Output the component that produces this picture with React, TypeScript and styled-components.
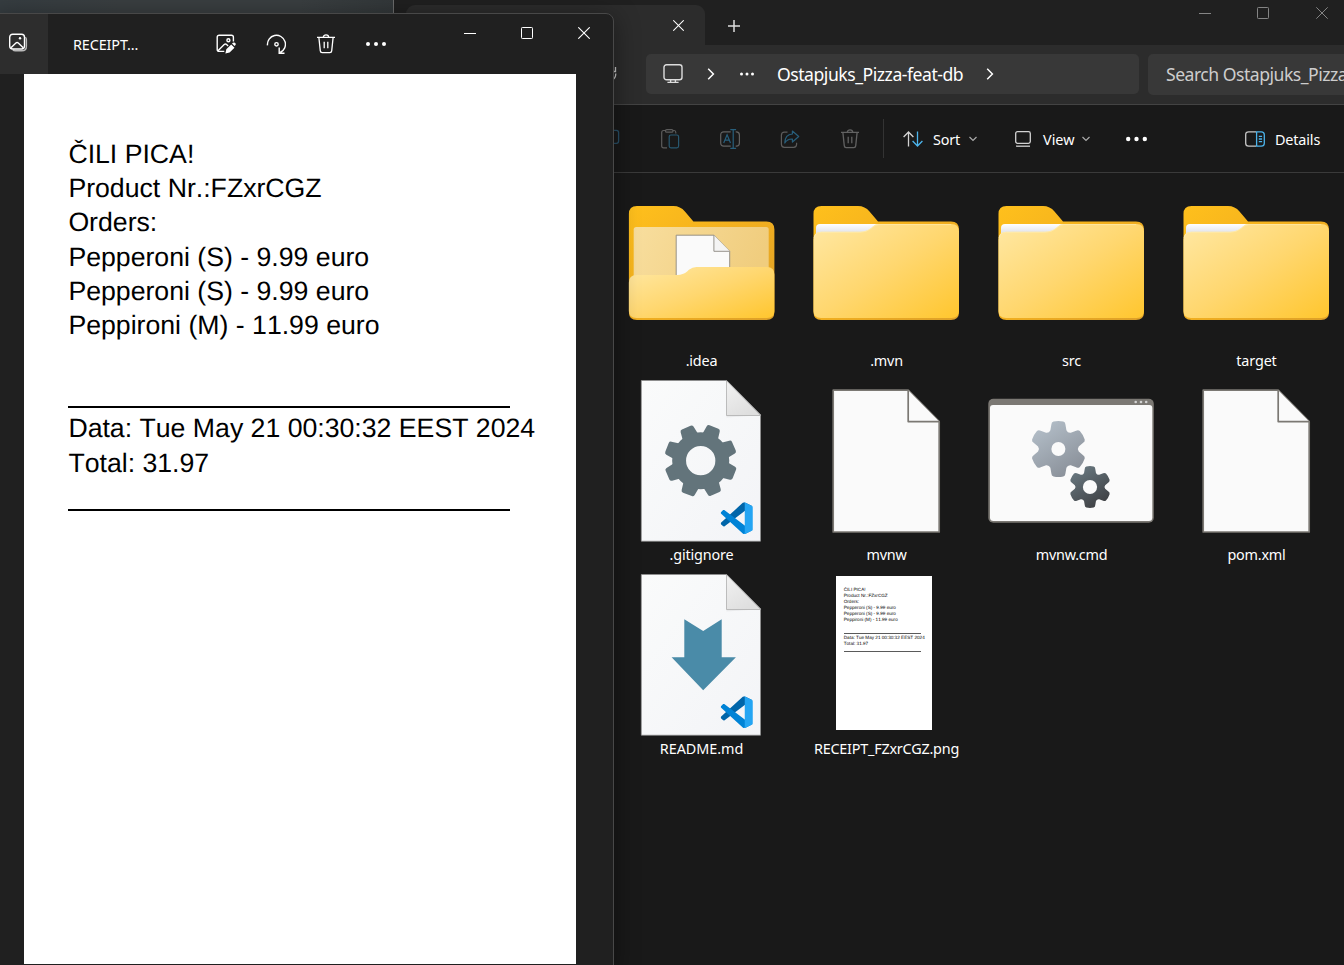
import React from "react";
import styled, { createGlobalStyle } from "styled-components";

const GlobalStyle = createGlobalStyle`
  * { box-sizing: border-box; }
  html, body { margin: 0; padding: 0; background: #191919; }
  body { width: 1344px; height: 965px; overflow: hidden; font-family: "Noto Sans", "Open Sans", sans-serif; color: #fff; }
  svg { display: block; flex: none; }
`;

/* ---------- desktop and windows ---------- */

const Desktop = styled.main`
  position: relative;
  width: 1344px;
  height: 965px;
  overflow: hidden;
  background: linear-gradient(90deg, #363d41 0, #3a3f41 120px, #3a3f41 300px, #33383a 393px);
`;

const ExplorerWindow = styled.section`
  position: absolute;
  left: 393px;
  top: 0;
  width: 951px;
  height: 965px;
  border-left: 1px solid #6c6c6c;
  background: #191919;
  display: flex;
  flex-direction: column;
  overflow: hidden;
`;

const PhotosWindow = styled.section`
  position: absolute;
  left: -8px;
  top: 13px;
  width: 622px;
  height: 960px;
  padding-left: 7px;
  border: 1px solid #484848;
  border-radius: 8px;
  background: #202020;
  box-shadow: 0 4px 26px rgba(0, 0, 0, 0.42);
  display: flex;
  flex-direction: column;
  overflow: hidden;
`;

/* ---------- photos ---------- */

const PhotosBar = styled.header`
  display: flex;
  height: 60px;
  flex: none;
  align-items: center;
`;

const GalleryButton = styled.div`
  width: 48px;
  height: 60px;
  padding: 19px 0 0 8px;
  background: #2d2d2d;
`;

const PhotoTitle = styled.span`
  width: 153px;
  padding: 2px 0 0 25px;
  font-size: 14.4px;
  line-height: 20px;
  letter-spacing: -0.12px;
  white-space: nowrap;
`;

const PhotoAction = styled.div`
  width: 50px;
  display: flex;
  justify-content: center;
`;

const CaptionButtons = styled.div<{ $color: string; $right: number }>`
  display: flex;
  align-self: flex-start;
  margin-left: auto;
  padding-right: ${(p) => p.$right}px;
  color: ${(p) => p.$color};
`;

const CaptionButton = styled.div<{ $w: number; $h: number; $left?: number }>`
  width: ${(p) => p.$w}px;
  height: ${(p) => p.$h}px;
  padding-left: ${(p) => p.$left ?? 0}px;
  display: flex;
  align-items: center;
  justify-content: center;
`;

const PhotoCanvas = styled.div`
  flex: none;
  width: 552px;
  height: 890px;
  margin-left: 24px;
  background: #fff;
`;

const Paper = styled.div<{ $em: number; $width: number; $height: number }>`
  font-family: "Liberation Sans", Arial, sans-serif;
  font-size: ${(p) => p.$em}px;
  font-kerning: none;
  text-rendering: geometricPrecision;
  line-height: 1.288em;
  width: ${(p) => p.$width}px;
  height: ${(p) => p.$height}px;
  padding: 2.35em 0 0 1.665em;
  background: #fff;
  color: #000;
  white-space: nowrap;
  overflow: hidden;
`;

const PaperLine = styled.div`
  height: 1.288em;
`;

const PaperRule = styled.div<{ $first?: boolean; $ink: string }>`
  width: 16.55em;
  height: ${(p) => (p.$first ? "2.46em" : "1.169em")};
  border-bottom: 0.085em solid ${(p) => p.$ink};
  margin-bottom: ${(p) => (p.$first ? "0.118em" : "0")};
`;

const receipt = [
  "ČILI PICA!",
  "Product Nr.:FZxrCGZ",
  "Orders:",
  "Pepperoni (S) - 9.99 euro",
  "Pepperoni (S) - 9.99 euro",
  "Peppironi (M) - 11.99 euro",
];

function Receipt({ em, width, height, ink = "#000" }: { em: number; width: number; height: number; ink?: string }) {
  return (
    <Paper $em={em} $width={width} $height={height}>
      {receipt.map((line, i) => (
        <PaperLine key={i}>{line}</PaperLine>
      ))}
      <PaperRule $first $ink={ink} />
      <PaperLine>Data: Tue May 21 00:30:32 EEST 2024</PaperLine>
      <PaperLine>Total: 31.97</PaperLine>
      <PaperRule $ink={ink} />
    </Paper>
  );
}

/* ---------- explorer chrome ---------- */

const TabStrip = styled.header`
  display: flex;
  flex: none;
  height: 45px;
  background: #202020;
`;

const Tab = styled.div`
  width: 299px;
  height: 40px;
  margin: 5px 0 0 12px;
  padding: 15px 21px 0 0;
  display: flex;
  justify-content: flex-end;
  border-radius: 9px 9px 0 0;
  background: #2c2c2c;
`;

const NewTab = styled.div`
  padding: 20px 0 0 23px;
`;

const AddressRow = styled.div`
  display: flex;
  flex: none;
  height: 60px;
  padding: 9px 0 0 212px;
  background: #2c2c2c;
  border-bottom: 1px solid #434343;
`;

const RefreshSlot = styled.div`
  flex: none;
  width: 40px;
  padding-top: 12px;
`;

const AddressBox = styled.div`
  display: flex;
  flex: none;
  align-items: center;
  width: 493px;
  height: 40px;
  border-radius: 5px;
  background: #383838;
`;

const Crumb = styled.span`
  width: 201px;
  margin-left: 23px;
  font-size: 17.6px;
  line-height: 24px;
  letter-spacing: -0.47px;
  white-space: nowrap;
`;

const CrumbIcon = styled.div<{ $left: number }>`
  margin-left: ${(p) => p.$left}px;
`;

const SearchBox = styled.div`
  width: 196px;
  flex: none;
  height: 41px;
  margin-left: 9px;
  padding: 8px 0 0 18px;
  border-radius: 5px 0 0 5px;
  background: #383838;
  color: #cdcdcd;
  font-size: 17.6px;
  line-height: 24px;
  letter-spacing: -0.5px;
  white-space: nowrap;
`;

const CommandBar = styled.nav`
  display: flex;
  align-items: center;
  flex: none;
  height: 68px;
  padding-left: 186px;
  border-bottom: 1px solid #3a3a3a;
`;

const Command = styled.div`
  width: 60px;
  display: flex;
  justify-content: center;
`;

const Divider = styled.div`
  width: 1px;
  height: 39px;
  margin: 0 19px 0 3px;
  background: #333;
`;

const LabelCommand = styled.div<{ $width: number; $gap: number }>`
  display: flex;
  align-items: center;
  width: ${(p) => p.$width}px;
  gap: ${(p) => p.$gap}px;
`;

const CommandText = styled.span<{ $w: number; $ls: number }>`
  width: ${(p) => p.$w}px;
  padding-top: 2px;
  font-size: 14.4px;
  line-height: 20px;
  letter-spacing: ${(p) => p.$ls}px;
  white-space: nowrap;
`;

const MoreCommands = styled.div`
  width: 119px;
`;

/* ---------- file grid ---------- */

const Files = styled.div`
  display: grid;
  grid-template-columns: repeat(4, 185px);
  grid-auto-rows: 194px;
  padding: 11px 0 0 215px;
  width: 1000px;
`;

const FileItem = styled.div`
  display: flex;
  flex-direction: column;
  align-items: center;
`;

const FileArt = styled.div`
  width: 169px;
  height: 164px;
`;

const FileName = styled.span<{ $ls: number }>`
  margin-top: 3px;
  font-size: 14.4px;
  line-height: 20px;
  letter-spacing: ${(p) => p.$ls}px;
  white-space: nowrap;
`;

const Thumb = styled.div`
  width: 96px;
  height: 154px;
  margin: 4px 0 0 34px;
`;

/* ---------- icons ---------- */

const Minimize = () => (
  <svg width="12" height="12" viewBox="0 0 12 12"><path d="M0 6.5h12" stroke="currentColor" /></svg>
);
const Maximize = () => (
  <svg width="12" height="12" viewBox="0 0 12 12"><rect x=".5" y=".5" width="11" height="11" rx=".8" fill="none" stroke="currentColor" /></svg>
);
const Close = ({ size = 12, width = 1.1 }: { size?: number; width?: number }) => (
  <svg width={size} height={size} viewBox="0 0 12 12"><path d="M.3.3l11.4 11.4M11.7.3.3 11.7" stroke="currentColor" strokeWidth={width} /></svg>
);
const Dots = ({ w, r }: { w: number; r: number }) => (
  <svg width={w} height="6" viewBox={`0 0 ${w} 6`} fill="#fff">
    <circle cx={r} cy="3" r={r} /><circle cx={w / 2} cy="3" r={r} /><circle cx={w - r} cy="3" r={r} />
  </svg>
);
const GalleryIcon = () => (
  <svg width="20" height="20" viewBox="0 0 20 20" fill="none" stroke="#fff" strokeWidth="1.4">
    <path d="M17.4 4.2q1 .8 1 2.4v6.6q0 4.600-4.600 4.600H7.400q-1.700 0-2.600-1" stroke="#bbb" />
    <rect x="1.700" y="1.200" width="14.800" height="14.800" rx="3" />
    <path d="M3 14.800l4.900-4.700q1.200-1.100 2.400 0l4.900 4.700" />
    <circle cx="12" cy="5.300" r="1.200" fill="#fff" stroke="none" />
  </svg>
);
const EditPhotoIcon = () => (
  <svg width="20" height="20" viewBox="0 0 20 20" fill="none" stroke="#fff" strokeWidth="1.400">
    <path d="M8.300 17.400H3.200Q1.200 17.400 1.200 15.400V3.200Q1.200 1.200 3.200 1.200H15.400Q17.400 1.200 17.400 3.200V7.500" />
    <path d="M2 16.800l6.200-6.200q1.200-1.100 2.400 0l1.500 1.400" />
    <circle cx="12.400" cy="6.200" r="1.500" />
    <path d="M9.400 19.600l.9-4.300 4.900-4.900 3.300 3.300-4.900 4.900zM16 9.600l.9-.8q1.400-.9 2.400.2.900 1.300 0 2.300l-.8.800z" fill="#fff" stroke="none" />
  </svg>
);
const RotateIcon = () => (
  <svg width="20" height="20" viewBox="0 0 20 20" fill="none" stroke="#fff" strokeWidth="1.400">
    <path d="M1.500 11.300A9 9 0 1 1 14.200 18.500M13.200 13.600v5.600h5.300" />
    <circle cx="10.500" cy="10.300" r="1.700" />
  </svg>
);
const TrashIcon = ({ color }: { color: string }) => (
  <svg width="20" height="20" viewBox="0 0 20 20" fill="none" stroke={color} strokeWidth="1.300">
    <path d="M1 3.400h18M7.300 3.200C7.300.2 12.700.2 12.700 3.200M2.900 3.600l1.400 13.300q.2 1.700 1.800 1.700h7.800q1.600 0 1.800-1.700l1.400-13.300M8.200 7.700v6.600M11.800 7.700v6.600" />
  </svg>
);
const PcIcon = () => (
  <svg width="20" height="20" viewBox="0 0 20 20" fill="none" stroke="#ddd" strokeWidth="1.400">
    <rect x="1" y=".7" width="18" height="15" rx="2.500" /><path d="M7.600 15.700v2.600M12.400 15.700v2.600M4.400 18.400h11.200" />
  </svg>
);
const ChevronRight = () => (
  <svg width="8" height="12" viewBox="0 0 8 12" fill="none" stroke="#fff" strokeWidth="1.500"><path d="M1.200.8 6.400 6l-5.200 5.200" /></svg>
);
const ChevronDown = () => (
  <svg width="8" height="6" viewBox="0 0 8 6" fill="none" stroke="#aaa" strokeWidth="1.200"><path d="M.5 1 4 4.500 7.500 1" /></svg>
);
const RefreshIcon = () => (
  <svg width="12" height="16" viewBox="0 0 12 16" fill="none" stroke="#ccc" strokeWidth="1.300">
    <path d="M9.500 1v4.500H5.500M9.800 7.500Q9.800 12.500 5.500 14.600" />
  </svg>
);
const CopyIcon = () => (
  <svg width="20" height="20" viewBox="0 0 20 20" fill="none" stroke="#285068" strokeWidth="1.300"><rect x="5" y="1.300" width="13.600" height="13" rx="2.200" /></svg>
);
const PasteIcon = () => (
  <svg width="20" height="20" viewBox="0 0 20 20" fill="none" stroke="#5c5c5c" strokeWidth="1.200">
    <path d="M7 18.900H3.600Q1.700 18.900 1.700 17V3.400Q1.700 1.500 3.600 1.500H5.500M13 1.500h1.200q1.600 0 1.600 1.900v1.200" />
    <rect x="5.500" y=".6" width="7.500" height="2.600" rx="1.300" />
    <rect x="9.200" y="6" width="9.400" height="12.900" rx="1.800" stroke="#285870" />
  </svg>
);
const RenameIcon = () => (
  <svg width="20" height="20" viewBox="0 0 20 20" fill="none" stroke="#626262" strokeWidth="1.200">
    <path d="M10.700 2.900H3.800Q.7 2.900.7 6v8q0 3.100 3.100 3.100h6.900M15.700 2.900h.7q3 0 3 3.100v8q0 3.100-3 3.100h-.7" />
    <path d="M3.700 14 7.100 5.800 10.500 14M4.900 11.200h4.400M13.200.8v18.400M10.300.7h5.800M10.300 19.300h5.800" stroke="#285f7c" />
  </svg>
);
const ShareIcon = () => (
  <svg width="20" height="20" viewBox="0 0 20 20" fill="none" stroke="#5c5c5c" strokeWidth="1.200" strokeLinejoin="round">
    <path d="M7.500 3.200H4.400Q1.400 3.200 1.400 6.200v9.100q0 3 3 3h9.200q3 0 3-3v-1.500" />
    <path d="M12.400 2l6.300 5.500-6.300 5.500V10Q7.300 9.800 4.800 14 5 5.300 12.400 5z" stroke="#285f7c" />
  </svg>
);
const SortIcon = () => (
  <svg width="20" height="16" viewBox="0 0 20 16" fill="none" stroke="#d2d2d2" strokeWidth="1.300">
    <path d="M5.500 15.500V1M.6 6 5.500 1l4.900 5" /><path d="M14.500.5V15M9.600 10l4.900 5 4.900-5" stroke="#4cb4ec" />
  </svg>
);
const ViewIcon = () => (
  <svg width="16" height="16" viewBox="0 0 16 16" fill="none" stroke="#d2d2d2" strokeWidth="1.300">
    <rect x=".7" y=".7" width="14.600" height="11.600" rx="1.800" /><path d="M1 15.200h14" />
  </svg>
);
const DetailsIcon = () => (
  <svg width="20" height="16" viewBox="0 0 20 16" fill="none" stroke="#c8c8c8" strokeWidth="1.300">
    <path d="M11 .8H3.700Q.7.800.7 3.700v8.600q0 2.900 3 2.900H11" />
    <path d="M11.600.8h4.700q3 0 3 2.900v8.600q0 2.900-3 2.900h-4.700zM13.800 5.400h3.300M13.800 8h3.300M13.800 10.600h3.300" stroke="#4cb4ec" />
  </svg>
);

/* ---------- file art ---------- */

const ArtDefs = () => (
  <svg width="0" height="0" style={{ position: "absolute" }}>
    <defs>
      <linearGradient id="back" x1="0" y1="0" x2="1" y2="1"><stop offset="0" stopColor="#ffc01c" /><stop offset=".45" stopColor="#f3b01e" /><stop offset="1" stopColor="#dda029" /></linearGradient>
      <linearGradient id="front" x1="0" y1="0" x2="1" y2="1"><stop offset="0" stopColor="#ffe8a4" /><stop offset=".5" stopColor="#ffd76f" /><stop offset="1" stopColor="#ffc62e" /></linearGradient>
      <linearGradient id="inner" x1="0" y1="0" x2="1" y2=".2"><stop offset="0" stopColor="#f8de9e" /><stop offset="1" stopColor="#f0cd7e" /></linearGradient>
      <linearGradient id="slip" x1="0" y1="0" x2="0" y2="1"><stop offset="0" stopColor="#fff" /><stop offset="1" stopColor="#d5d8e2" /></linearGradient>
      <linearGradient id="sheet" x1="0" y1="0" x2="1" y2="1"><stop offset="0" stopColor="#fafbfb" /><stop offset="1" stopColor="#f3f4f7" /></linearGradient>
      <linearGradient id="fold" x1="0" y1="0" x2=".6" y2="1"><stop offset="0" stopColor="#f2f2f2" /><stop offset="1" stopColor="#dedede" /></linearGradient>
      <linearGradient id="lightGear" x1=".2" y1="0" x2=".8" y2="1"><stop offset="0" stopColor="#b4bfc9" /><stop offset="1" stopColor="#878d96" /></linearGradient>
      <linearGradient id="darkGear" x1=".2" y1="0" x2=".8" y2="1"><stop offset="0" stopColor="#6a7a82" /><stop offset="1" stopColor="#3c3d40" /></linearGradient>
    </defs>
  </svg>
);

const backPath = "M11.500 30q0-8 8-8H56q7 0 11.500 5.500l8.500 10H149q8 0 8 8V128q0 8-8 8H19.500q-8 0-8-8z";

const FolderArt = () => (
  <svg width="169" height="164" viewBox="0 0 169 164">
    <path d={backPath} fill="url(#back)" />
    <path d="M14 52V44q0-4 4-4H78L64 50z" fill="url(#slip)" />
    <path d="M11.500 55.500q0-7.800 7.800-7.800H58q6.500 0 11-3.800l1.800-1.500Q73.500 40 77 40h72.500q7.500 0 7.500 7.500V127q0 7-7.500 7H19q-7.500 0-7.500-7z" fill="url(#front)" />
    <path d="M12 54q.8-5.700 7.300-5.700H58q6.500 0 11-3.800l2-1.600Q73.500 40.600 77 40.600h72" fill="none" stroke="#ffefb8" strokeWidth="1" opacity=".6" />
  </svg>
);

const OpenFolderArt = () => (
  <svg width="169" height="164" viewBox="-.4 0 169 164">
    <path d={backPath} fill="url(#back)" />
    <rect x="16.300" y="43" width="135" height="60" rx="2.500" fill="url(#inner)" />
    <path d="M58.800 51.200H96.500L112.300 67.300V100H58.800z" fill="#fafafa" stroke="#8c8880" strokeWidth=".9" />
    <path d="M96.500 51.200V67.300h15.800" fill="#f4f4f4" stroke="#8c8880" strokeWidth=".9" />
    <path d="M11.500 98.500q0-7.500 7.500-7.500H60q5.500 0 10-3.800l1.500-1.500Q75 83 79 83h70.500q7.500 0 7.500 7.500V127q0 7-7.500 7H19q-7.500 0-7.500-7z" fill="url(#front)" />
  </svg>
);

const PageArt = () => (
  <svg width="169" height="164" viewBox="0 0 169 164" fill="#fafafa" stroke="#7b7873" strokeWidth="1.700" strokeLinejoin="round">
    <path d="M31.200 12.200H106.200L137.200 43.600V154H31.200z" /><path d="M106.200 12.200V43.600h31" />
  </svg>
);

const VsCodeBadge = () => (
  <svg x="103.500" y="124.200" width="32.500" height="32" viewBox="0 0 100 100">
    <path fill="#0065A9" d="M96.461 10.796 75.857.876C73.472-.273 70.622.212 68.750 2.083L1.299 63.583c-1.815 1.654-1.813 4.511.004 6.162l5.510 5.009c1.485 1.350 3.722 1.450 5.321.237L93.361 13.370C96.086 11.303 100 13.246 100 16.667v-.24c0-2.401-1.375-4.589-3.539-5.631z" />
    <path fill="#0083d6" d="M96.461 89.204 75.857 99.125c-2.385 1.148-5.235.663-7.107-1.208L1.299 36.417c-1.815-1.654-1.813-4.511.004-6.162l5.510-5.009c1.485-1.350 3.722-1.450 5.321-.237l81.227 61.621C96.086 88.697 100 86.754 100 83.333v.24c0 2.401-1.375 4.589-3.539 5.631z" />
    <path fill="#24a5f3" d="M75.858 99.126c-2.386 1.148-5.236.663-7.108-1.209C71.056 100.223 75 98.590 75 95.328V4.672C75 1.410 71.056-.223 68.750 2.083 70.622.211 73.472-.274 75.858.874l20.601 9.907C98.623 11.822 100 14.011 100 16.413v67.174c0 2.402-1.377 4.592-3.541 5.633z" />
  </svg>
);

const teeth = (n: number, step: number, offset: number) => Array.from({ length: n }, (_, i) => offset + i * step);

const CodeSheetArt = ({ children }: { children: React.ReactNode }) => (
  <svg width="169" height="164" viewBox="0 0 169 164">
    <path d="M24.300 2.500H109.700L143.500 36.500V163.200H24.300z" fill="url(#sheet)" stroke="#8f8f8f" strokeWidth=".7" />
    <path d="M109.500 39.500V3L143.500 37.300z" fill="#000" opacity=".05" />
    <path d="M109.500 2.700V37.500H143.600z" fill="url(#fold)" stroke="#a6a6a6" strokeWidth=".7" />
    {children}
    <VsCodeBadge />
  </svg>
);

const CogArt = () => (
  <CodeSheetArt>
    <g transform="translate(83.700 82.700)" fill="#63747b">
      {teeth(8, 45, 21.500).map((a) => (
        <path key={a} transform={`rotate(${a})`} d="M-8.200-26 L-7-34.200 Q-6.700-36.200-4.700-36.200 H4.700 Q6.700-36.200 7-34.200 L8.200-26z" />
      ))}
      <circle r="21.600" fill="none" stroke="#63747b" strokeWidth="13.900" />
    </g>
  </CodeSheetArt>
);

const ReadmeArt = () => (
  <CodeSheetArt>
    <path d="M67.300 47.300 86.200 59l18.500-11.700v38h14.200L86.200 118.300 54.600 85.300h12.700z" fill="#4a8ba8" />
  </CodeSheetArt>
);

const gearPath = (() => {
  const points: string[] = [];
  for (let i = 0; i < 6; i++) {
    const at = (deg: number, r: number) => {
      const t = ((i * 60 + deg) * Math.PI) / 180;
      return `${(Math.sin(t) * r).toFixed(2)} ${(-Math.cos(t) * r).toFixed(2)}`;
    };
    points.push(
      `${i ? "L" : "M"}${at(-23, 20.5)} L${at(-16, 25.500)} Q${at(-14.500, 27.800)} ${at(-10, 28)} Q${at(0, 28.600)} ${at(10, 28)} Q${at(14.500, 27.800)} ${at(16, 25.500)} L${at(23, 20.500)} Q${at(30, 18.500)} ${at(37, 20.500)}`
    );
  }
  return points.join(" ") + "z";
})();

const ScriptArt = () => (
  <svg width="169" height="164" viewBox="0 0 169 164">
    <rect x="1.300" y="20.700" width="165.500" height="124" rx="5" fill="#7b7873" />
    <path d="M3 30q0-3 3-3H162.300q3 0 3 3V139.500q0 3.500-3.500 3.500H6.500q-3.500 0-3.500-3.500z" fill="#fafafa" />
    <g fill="#d2d2d2"><circle cx="148.700" cy="24" r="1.300" /><circle cx="154" cy="24" r="1.300" /><circle cx="159.200" cy="24" r="1.300" /></g>
    <path d={gearPath} transform="translate(71.400 71)" fill="url(#lightGear)" />
    <circle cx="71.400" cy="71" r="7" fill="#fafafa" />
    <path d={gearPath} transform="translate(103 109) scale(.745)" fill="url(#darkGear)" />
    <circle cx="103" cy="109" r="7.100" fill="#fafafa" />
  </svg>
);

const files: { name: string; ls: number; art: React.ReactNode }[] = [
  { name: ".idea", ls: -0.2, art: <OpenFolderArt /> },
  { name: ".mvn", ls: -0.2, art: <FolderArt /> },
  { name: "src", ls: -0.2, art: <FolderArt /> },
  { name: "target", ls: -0.15, art: <FolderArt /> },
  { name: ".gitignore", ls: -0.15, art: <CogArt /> },
  { name: "mvnw", ls: -0.25, art: <PageArt /> },
  { name: "mvnw.cmd", ls: -0.25, art: <ScriptArt /> },
  { name: "pom.xml", ls: -0.2, art: <PageArt /> },
  { name: "README.md", ls: -0.05, art: <ReadmeArt /> },
  { name: "RECEIPT_FZxrCGZ.png", ls: -0.22, art: <Thumb><Receipt em={4.6435} width={96} height={154} ink="#5a5a5a" /></Thumb> },
];

export default function App() {
  return (
    <Desktop>
      <GlobalStyle />
      <ArtDefs />
      <ExplorerWindow>
        <TabStrip>
          <Tab><Close size={11} /></Tab>
          <NewTab>
            <svg width="12" height="12" viewBox="0 0 12 12"><path d="M6 0v12M0 6h12" stroke="#ddd" strokeWidth="1.500" /></svg>
          </NewTab>
          <CaptionButtons $color="#858585" $right={0}>
            <CaptionButton $w={58} $h={26}><Minimize /></CaptionButton>
            <CaptionButton $w={58} $h={26}><Maximize /></CaptionButton>
            <CaptionButton $w={52} $h={26} $left={8}><Close width={1} /></CaptionButton>
          </CaptionButtons>
        </TabStrip>
        <AddressRow>
          <RefreshSlot><RefreshIcon /></RefreshSlot>
          <AddressBox>
            <CrumbIcon $left={17}><PcIcon /></CrumbIcon>
            <CrumbIcon $left={24}><ChevronRight /></CrumbIcon>
            <CrumbIcon $left={25}><Dots w={14} r={1.5} /></CrumbIcon>
            <Crumb>Ostapjuks_Pizza-feat-db</Crumb>
            <CrumbIcon $left={8}><ChevronRight /></CrumbIcon>
          </AddressBox>
          <SearchBox>Search Ostapjuks_Pizza</SearchBox>
        </AddressRow>
        <CommandBar>
          <Command><CopyIcon /></Command>
          <Command><PasteIcon /></Command>
          <Command><RenameIcon /></Command>
          <Command><ShareIcon /></Command>
          <Command><TrashIcon color="#626262" /></Command>
          <Divider />
          <LabelCommand $width={112} $gap={10}>
            <SortIcon /><CommandText $w={26} $ls={-0.15}>Sort</CommandText><ChevronDown />
          </LabelCommand>
          <LabelCommand $width={111} $gap={12}>
            <ViewIcon /><CommandText $w={27} $ls={0}>View</CommandText><ChevronDown />
          </LabelCommand>
          <MoreCommands><Dots w={21} r={2.2} /></MoreCommands>
          <LabelCommand $width={90} $gap={10}>
            <DetailsIcon /><CommandText $w={50} $ls={-0.15}>Details</CommandText>
          </LabelCommand>
        </CommandBar>
        <Files>
          {files.map((f) => (
            <FileItem key={f.name}>
              <FileArt>{f.art}</FileArt>
              <FileName $ls={f.ls}>{f.name}</FileName>
            </FileItem>
          ))}
        </Files>
      </ExplorerWindow>
      <PhotosWindow>
        <PhotosBar>
          <GalleryButton><GalleryIcon /></GalleryButton>
          <PhotoTitle>RECEIPT...</PhotoTitle>
          <PhotoAction><EditPhotoIcon /></PhotoAction>
          <PhotoAction><RotateIcon /></PhotoAction>
          <PhotoAction><TrashIcon color="#fff" /></PhotoAction>
          <PhotoAction><Dots w={20} r={2} /></PhotoAction>
          <CaptionButtons $color="#fff" $right={1}>
            <CaptionButton $w={57} $h={38}><Minimize /></CaptionButton>
            <CaptionButton $w={57} $h={38}><Maximize /></CaptionButton>
            <CaptionButton $w={57} $h={38}><Close /></CaptionButton>
          </CaptionButtons>
        </PhotosBar>
        <PhotoCanvas><Receipt em={26.67} width={552} height={890} /></PhotoCanvas>
      </PhotosWindow>
    </Desktop>
  );
}
